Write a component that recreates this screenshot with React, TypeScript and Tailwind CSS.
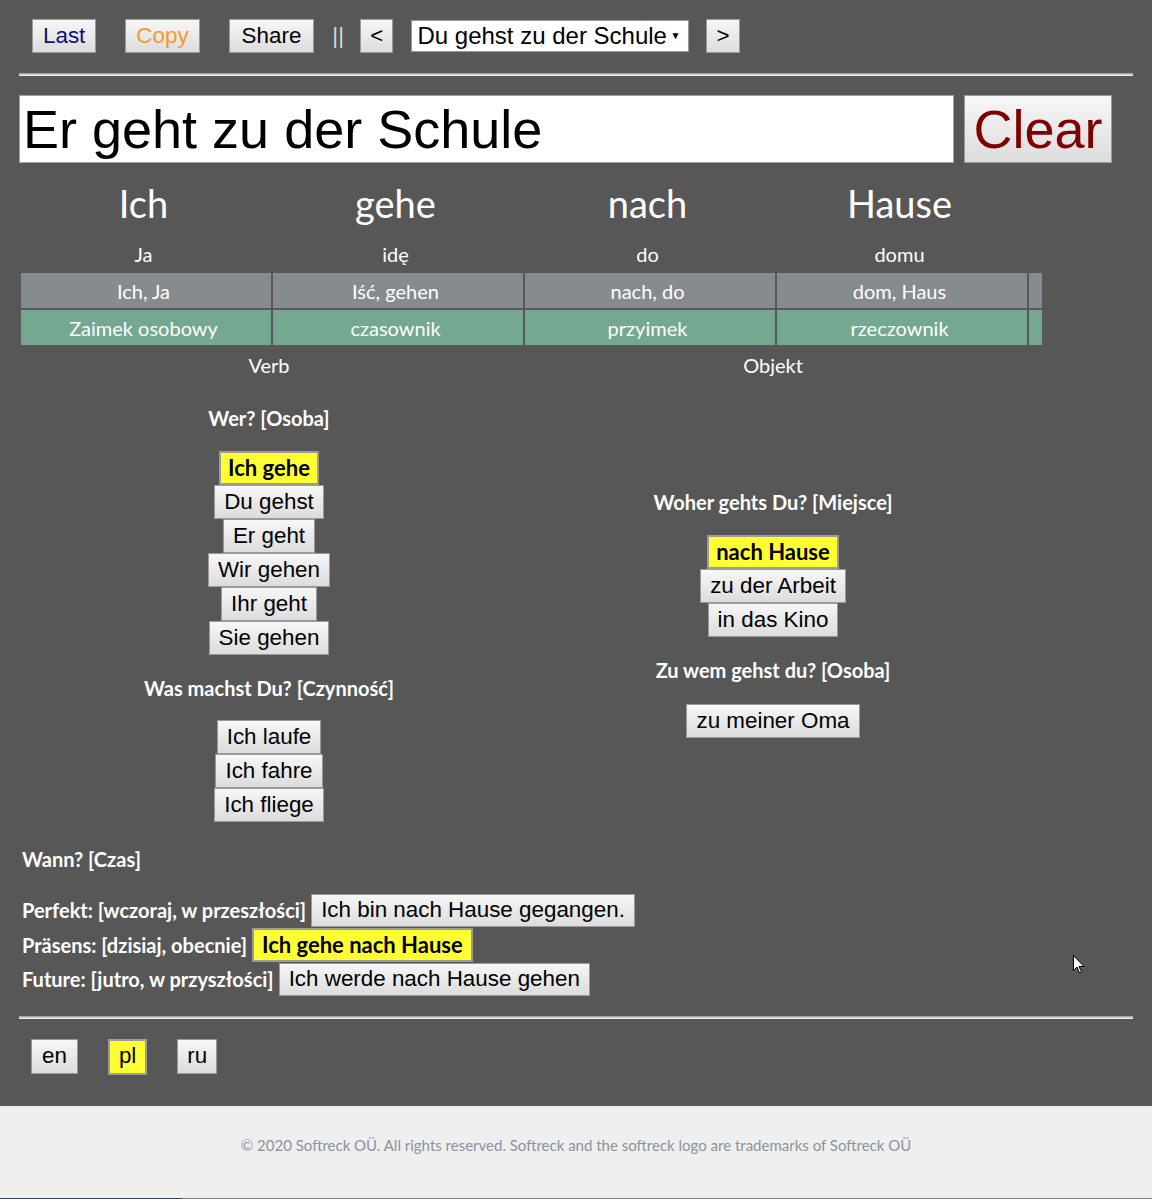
import React from "react";

const arial = "font-['Liberation_Sans',Arial,sans-serif]";
const lato = "font-['Lato',sans-serif]";
const btn =
  "flex items-center justify-center bg-linear-to-b from-[#f7f7f7] to-[#dcdcdc] border border-[#9a9a9a] font-['Liberation_Sans',Arial,sans-serif] text-[22.4px] leading-none whitespace-nowrap";
const ybtn =
  "flex items-center justify-center bg-[#ffff33] border-2 border-[#9c9c9c] font-['Lato',sans-serif] font-bold text-[22px] leading-none text-black whitespace-nowrap";

function Btn({ children }: { children: React.ReactNode }) {
  return <div className={`${btn} h-[34px] px-[9px] text-black`}>{children}</div>;
}
function YBtn({ children }: { children: React.ReactNode }) {
  return <div className={`${ybtn} h-[34px] px-[7px]`}>{children}</div>;
}

const words = ["Ich", "gehe", "nach", "Hause"];
const trans = ["Ja", "idę", "do", "domu"];
const meanings = ["Ich, Ja", "Iść, gehen", "nach, do", "dom, Haus"];
const kinds = ["Zaimek osobowy", "czasownik", "przyimek", "rzeczownik"];

function Heading({ children }: { children: React.ReactNode }) {
  return (
    <div className={`${lato} font-bold text-[20px] leading-[24px] h-[24px] text-white whitespace-nowrap`}>
      {children}
    </div>
  );
}

export default function App() {
  return (
    <div className="relative w-full">
      <div className="bg-[#575757] px-[19px] pt-[19px] pb-[31px]">
        {/* top bar */}
        <div className="flex items-center pl-[13px] h-[34px]">
          <div className={`${btn} h-[34px] px-[10px] text-[#10107f]`}>Last</div>
          <div className={`${btn} h-[34px] px-[10px] ml-[29px] text-[#f79a2e]`}>Copy</div>
          <div className={`${btn} h-[34px] px-[12px] ml-[29px] text-black`}>Share</div>
          <div className={`${arial} text-[22.4px] leading-none text-[#d8d8d8] ml-[18px] w-[10px]`}>||</div>
          <div className={`${btn} h-[34px] px-[9px] ml-[18px] text-black`}>&lt;</div>
          <div
            className={`${arial} ml-[18px] h-[32px] w-[278px] bg-white border border-[#9a9a9a] flex items-center pl-[5px] pr-[8px] text-[24px] leading-none text-black`}
          >
            <span className="flex-1 whitespace-nowrap">Du gehst zu der Schule</span>
            <span className="text-[10px]">▼</span>
          </div>
          <div className={`${btn} h-[34px] px-[9px] ml-[17px] text-black`}>&gt;</div>
        </div>

        {/* hr */}
        <div className="mt-[20px] h-[3px] border-t border-t-[#a8a8a8] border-b border-b-[#f0f0f0] bg-[#c8c8c8]" />

        {/* input row */}
        <div className="mt-[19px] flex items-stretch h-[68px]">
          <div
            className={`${arial} w-[935px] bg-white border border-[#a0a0a0] flex items-center pl-[3px] text-[54px] leading-none text-black whitespace-nowrap`}
          >
            Er geht zu der Schule
          </div>
          <div className={`${btn} ml-[10px] w-[148px] h-[68px] !text-[54px] text-[#800000]`}>Clear</div>
        </div>

        {/* word table */}
        <div className="ml-[2px] w-[1021px]">
          <div className="mt-[12px] grid grid-cols-[250px_250px_250px_250px_13px] gap-x-[2px] h-[56px]">
            {words.map((w) => (
              <div key={w} className={`${lato} flex items-center justify-center pr-[5px] text-[38px] leading-none text-white`}>
                {w}
              </div>
            ))}
            <div />
          </div>
          <div className="mt-[2px] grid grid-cols-[250px_250px_250px_250px_13px] gap-x-[2px] h-[38px]">
            {trans.map((w) => (
              <div key={w} className={`${lato} flex items-center justify-center pt-[4px] pr-[5px] text-[20px] leading-none text-white`}>
                {w}
              </div>
            ))}
            <div />
          </div>
          <div className="mt-[2px] grid grid-cols-[250px_250px_250px_250px_13px] gap-x-[2px] h-[35px]">
            {meanings.map((w) => (
              <div key={w} className={`${lato} flex items-center justify-center pr-[5px] bg-[#858b8e] text-[20px] leading-none text-white`}>
                {w}
              </div>
            ))}
            <div className="bg-[#858b8e]" />
          </div>
          <div className="mt-[2px] grid grid-cols-[250px_250px_250px_250px_13px] gap-x-[2px] h-[35px]">
            {kinds.map((w) => (
              <div key={w} className={`${lato} flex items-center justify-center pr-[5px] bg-[#74a891] text-[20px] leading-none text-white`}>
                {w}
              </div>
            ))}
            <div className="bg-[#74a891]" />
          </div>
        </div>

        {/* two columns */}
        <div className="mt-[2px] grid grid-cols-[500px_500px] gap-x-[4px]">
          <div className={`${lato} h-[36px] flex items-center justify-center text-[20px] text-white`}>Verb</div>
          <div className={`${lato} h-[36px] flex items-center justify-center text-[20px] text-white`}>Objekt</div>

          <div className="flex flex-col items-center pt-[23px]">
            <Heading>Wer? [Osoba]</Heading>
            <div className="mt-[21px] flex flex-col items-center">
              <YBtn>Ich gehe</YBtn>
              <Btn>Du gehst</Btn>
              <Btn>Er geht</Btn>
              <Btn>Wir gehen</Btn>
              <Btn>Ihr geht</Btn>
              <Btn>Sie gehen</Btn>
            </div>
            <div className="mt-[21px]">
              <Heading>Was machst Du? [Czynność]</Heading>
            </div>
            <div className="mt-[20px] flex flex-col items-center">
              <Btn>Ich laufe</Btn>
              <Btn>Ich fahre</Btn>
              <Btn>Ich fliege</Btn>
            </div>
          </div>

          <div className="flex flex-col items-center self-center pt-[23px]">
            <Heading>Woher gehts Du? [Miejsce]</Heading>
            <div className="mt-[21px] flex flex-col items-center">
              <YBtn>nach Hause</YBtn>
              <Btn>zu der Arbeit</Btn>
              <Btn>in das Kino</Btn>
            </div>
            <div className="mt-[21px]">
              <Heading>Zu wem gehst du? [Osoba]</Heading>
            </div>
            <div className="mt-[22px] flex flex-col items-center">
              <Btn>zu meiner Oma</Btn>
            </div>
          </div>
        </div>

        {/* Wann */}
        <div className="mt-[25px] pl-[3px]">
          <Heading>Wann? [Czas]</Heading>
        </div>
        <div className="mt-[22px] pl-[3px] flex flex-col">
          <div className="flex items-center h-[34px]">
            <Heading>Perfekt: [wczoraj, w przeszłości]</Heading>
            <div className={`${btn} h-[33px] px-[9px] ml-[5px] text-black`}>Ich bin nach Hause gegangen.</div>
          </div>
          <div className="flex items-center h-[35px]">
            <Heading>Präsens: [dzisiaj, obecnie]</Heading>
            <div className={`${ybtn} h-[34px] px-[8px] ml-[5px]`}>Ich gehe nach Hause</div>
          </div>
          <div className="flex items-center h-[34px]">
            <Heading>Future: [jutro, w przyszłości]</Heading>
            <div className={`${btn} h-[33px] px-[9px] ml-[5px] text-black`}>Ich werde nach Hause gehen</div>
          </div>
        </div>

        {/* hr */}
        <div className="mt-[20px] h-[3px] border-t border-t-[#a8a8a8] border-b border-b-[#f0f0f0] bg-[#c8c8c8]" />

        {/* languages */}
        <div className="mt-[19px] pl-[12px] flex items-center h-[37px]">
          <div className={`${btn} h-[35px] px-[10px] text-black`}>en</div>
          <div className={`bg-[#ffff33] border-2 border-[#9c9c9c] flex items-center justify-center ${arial} text-[22.4px] leading-none text-black h-[36px] px-[9px] ml-[30px]`}>
            pl
          </div>
          <div className={`${btn} h-[35px] px-[9px] ml-[30px] text-black`}>ru</div>
        </div>
      </div>

      {/* footer */}
      <div className="bg-[#efefef] h-[92px] pt-[30px] flex justify-center">
        <div className={`${lato} text-[15px] leading-[18px] text-[#8a93a0] whitespace-nowrap`}>
          © 2020 Softreck OÜ. All rights reserved. Softreck and the softreck logo are trademarks of Softreck OÜ
        </div>
      </div>
      <div className="flex h-[1px]">
        <div className="w-[182px] bg-[#1b4e79]" />
        <div className="flex-1 bg-[#7a7a7a]" />
      </div>

      {/* mouse cursor */}
      <svg className="absolute left-[1073px] top-[955px]" width="13" height="20" viewBox="0 0 13 20">
        <path d="M0.5 0.5 L0.5 15.5 L4 12 L6.5 18 L8.5 17 L6 11.5 L11 11.5 Z" fill="white" stroke="black" strokeWidth="1" />
      </svg>
    </div>
  );
}
